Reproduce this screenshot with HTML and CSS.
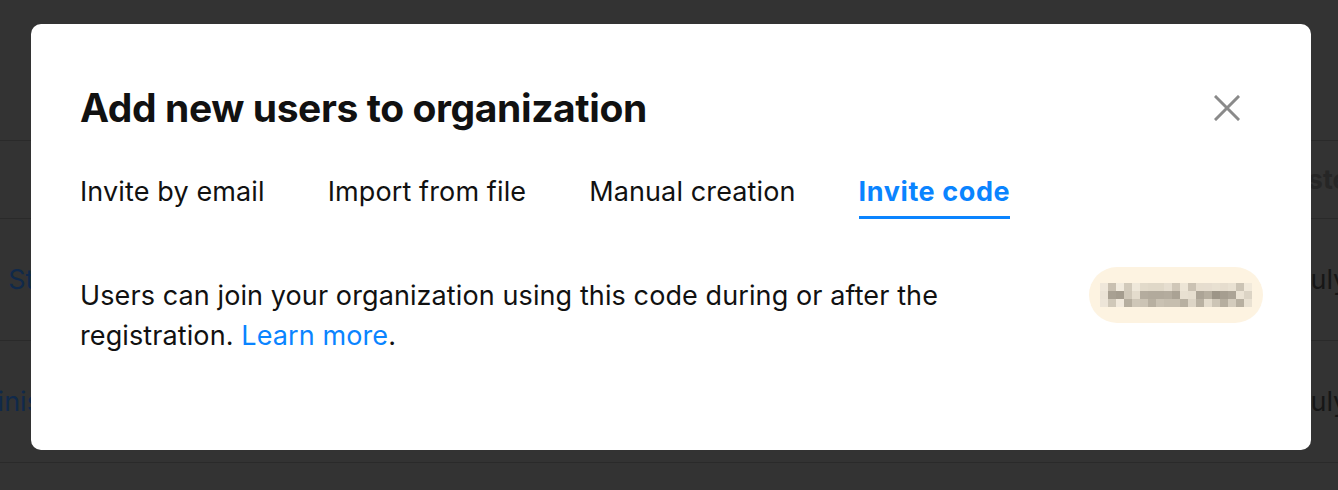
FILE: index.html
```html
<!DOCTYPE html>
<html lang="en">
<head>
    <meta charset="UTF-8">
    <meta name="viewport" content="width=device-width, initial-scale=1.0">
    <title>Organization users</title>
    <link rel="stylesheet" href="styles.css">
</head>
<body>

    <!-- Users table behind the dialog -->
    <main class="page">
        <div class="page-top"></div>
        <div class="row row-head">
            <div class="cell cell-name"></div>
            <div class="cell cell-date">Registered</div>
        </div>
        <div class="row">
            <div class="cell cell-name link">Anna Stewart</div>
            <div class="cell cell-date">July 12</div>
        </div>
        <div class="row">
            <div class="cell cell-name cell-name-wide link">Administrator</div>
            <div class="cell cell-date">July 3</div>
        </div>
        <div class="row row-last"></div>
    </main>

    <!-- Add users dialog -->
    <div class="modal">
        <div class="modal-header">
            <h1>Add new users to organization</h1>
            <button class="close" aria-label="Close">
                <svg width="26" height="26" viewBox="0 0 26 26">
                    <path d="M2 2 L24 24 M24 2 L2 24" stroke="#8a8a8a" stroke-width="3" stroke-linecap="square" fill="none"/>
                </svg>
            </button>
        </div>

        <nav class="tabs">
            <a class="tab">Invite by email</a>
            <a class="tab">Import from file</a>
            <a class="tab">Manual creation</a>
            <a class="tab tab-active">Invite code</a>
        </nav>

        <div class="modal-body">
            <p>Users can join your organization using this code during or after the registration. <a href="#" class="link-more">Learn more</a>.</p>
            <div class="code-pill">
                <svg width="152" height="24" viewBox="0 0 19 3" shape-rendering="crispEdges">
                    <g>
                        <rect x="0" y="0" width="1" height="1" fill="#efe7da"/>
                        <rect x="1" y="0" width="1" height="1" fill="#c9c0b1"/>
                        <rect x="2" y="0" width="1" height="1" fill="#f2ebde"/>
                        <rect x="3" y="0" width="1" height="1" fill="#d2cabb"/>
                        <rect x="4" y="0" width="1" height="1" fill="#efe8da"/>
                        <rect x="5" y="0" width="1" height="1" fill="#e2daca"/>
                        <rect x="6" y="0" width="1" height="1" fill="#e0d8c8"/>
                        <rect x="7" y="0" width="1" height="1" fill="#e0d8c8"/>
                        <rect x="8" y="0" width="1" height="1" fill="#e6ded0"/>
                        <rect x="9" y="0" width="1" height="1" fill="#d0c7b8"/>
                        <rect x="10" y="0" width="1" height="1" fill="#ede5d6"/>
                        <rect x="11" y="0" width="1" height="1" fill="#cbc2b3"/>
                        <rect x="12" y="0" width="1" height="1" fill="#e6ddce"/>
                        <rect x="13" y="0" width="1" height="1" fill="#e6ddcf"/>
                        <rect x="14" y="0" width="1" height="1" fill="#e8e0d1"/>
                        <rect x="15" y="0" width="1" height="1" fill="#e6ddce"/>
                        <rect x="16" y="0" width="1" height="1" fill="#e9e1d2"/>
                        <rect x="17" y="0" width="1" height="1" fill="#ccc4b5"/>
                        <rect x="18" y="0" width="1" height="1" fill="#f1e9da"/>
                    </g>
                    <g>
                        <rect x="0" y="1" width="1" height="1" fill="#ebe3d6"/>
                        <rect x="1" y="1" width="1" height="1" fill="#a8a092"/>
                        <rect x="2" y="1" width="1" height="1" fill="#a49c8e"/>
                        <rect x="3" y="1" width="1" height="1" fill="#d0c8b9"/>
                        <rect x="4" y="1" width="1" height="1" fill="#e4dccd"/>
                        <rect x="5" y="1" width="1" height="1" fill="#b4ac9e"/>
                        <rect x="6" y="1" width="1" height="1" fill="#b2aa9c"/>
                        <rect x="7" y="1" width="1" height="1" fill="#b2aa9c"/>
                        <rect x="8" y="1" width="1" height="1" fill="#b4ac9e"/>
                        <rect x="9" y="1" width="1" height="1" fill="#aaa294"/>
                        <rect x="10" y="1" width="1" height="1" fill="#e8e0d1"/>
                        <rect x="11" y="1" width="1" height="1" fill="#e6decf"/>
                        <rect x="12" y="1" width="1" height="1" fill="#aca496"/>
                        <rect x="13" y="1" width="1" height="1" fill="#b6ae9f"/>
                        <rect x="14" y="1" width="1" height="1" fill="#9d9587"/>
                        <rect x="15" y="1" width="1" height="1" fill="#a69e90"/>
                        <rect x="16" y="1" width="1" height="1" fill="#aca496"/>
                        <rect x="17" y="1" width="1" height="1" fill="#ebe3d4"/>
                        <rect x="18" y="1" width="1" height="1" fill="#dcd4c5"/>
                    </g>
                    <g>
                        <rect x="0" y="2" width="1" height="1" fill="#ede5d8"/>
                        <rect x="1" y="2" width="1" height="1" fill="#d0c8b9"/>
                        <rect x="2" y="2" width="1" height="1" fill="#f1e9dc"/>
                        <rect x="3" y="2" width="1" height="1" fill="#b6ae9f"/>
                        <rect x="4" y="2" width="1" height="1" fill="#cfc7b8"/>
                        <rect x="5" y="2" width="1" height="1" fill="#ccc4b5"/>
                        <rect x="6" y="2" width="1" height="1" fill="#b8b0a1"/>
                        <rect x="7" y="2" width="1" height="1" fill="#cac2b3"/>
                        <rect x="8" y="2" width="1" height="1" fill="#c6beaf"/>
                        <rect x="9" y="2" width="1" height="1" fill="#c6beaf"/>
                        <rect x="10" y="2" width="1" height="1" fill="#b8b0a1"/>
                        <rect x="11" y="2" width="1" height="1" fill="#ddd5c6"/>
                        <rect x="12" y="2" width="1" height="1" fill="#b9b1a2"/>
                        <rect x="13" y="2" width="1" height="1" fill="#e4dccd"/>
                        <rect x="14" y="2" width="1" height="1" fill="#cdc5b6"/>
                        <rect x="15" y="2" width="1" height="1" fill="#b6ae9f"/>
                        <rect x="16" y="2" width="1" height="1" fill="#d4ccbd"/>
                        <rect x="17" y="2" width="1" height="1" fill="#b8b0a1"/>
                        <rect x="18" y="2" width="1" height="1" fill="#e9e1d2"/>
                    </g>
                </svg>
            </div>
        </div>
    </div>

</body>
</html>
```

FILE: styles.css
```css
/* Page */
body, html {
    margin: 0;
    padding: 0;
    font-family: 'Inter', 'Noto Sans', sans-serif;
    background-color: #333333;
    overflow: hidden;
}

/* Table behind the dialog (already dimmed colours) */
.page {
    height: 490px;
    display: flex;
    flex-direction: column;
    overflow: hidden;
}

.page-top {
    flex-shrink: 0;
    box-sizing: border-box;
    height: 141px;
    border-bottom: 1px solid #2a2a2a;
}

.row {
    flex-shrink: 0;
    box-sizing: border-box;
    display: flex;
    align-items: center;
    height: 122px;
    border-bottom: 1px solid #2a2a2a;
    font-size: 27px;
    color: #161616;
}

.row-head {
    height: 78px;
    font-weight: 700;
    color: #262626;
}

.row-last {
    height: 27px;
    border-bottom: none;
}

.cell {
    white-space: nowrap;
}

/* name column: only its tail peeks out left of the dialog */
.cell-name {
    width: 106px;
    direction: rtl;
    text-align: left;
}

.cell-name-wide {
    width: 110px;
}

.cell-date {
    margin-left: auto;
    width: 43px;
}

.row-head .cell-date {
    width: 88px;
}

.link {
    color: #10294a;
}

/* Dialog */
.modal {
    position: absolute;
    top: 24px;
    left: 31px;
    width: 1280px;
    height: 426px;
    box-sizing: border-box;
    padding: 56px 48px 0 49px;
    background: #ffffff;
    border-radius: 10px;
}

.modal-header {
    display: flex;
    align-items: center;
    justify-content: space-between;
}

.modal-header h1 {
    margin: 0;
    font-size: 39px;
    font-weight: 700;
    letter-spacing: -0.4px;
    line-height: 56px;
    color: #111111;
}

.close {
    width: 48px;
    height: 48px;
    margin-right: 12px;
    padding: 0;
    border: none;
    background: none;
    display: flex;
    align-items: center;
    justify-content: center;
    cursor: pointer;
}

/* Tabs */
.tabs {
    display: flex;
    gap: 63px;
    margin-top: 38px;
}

.tab {
    font-size: 27px;
    line-height: 36px;
    letter-spacing: 0.12px;
    color: #111111;
    padding-bottom: 6px;
    border-bottom: 3px solid transparent;
    cursor: pointer;
}

.tab-active {
    color: #0a84ff;
    font-weight: 700;
    letter-spacing: 0.6px;
    border-bottom-color: #0a84ff;
}

/* Body */
.modal-body {
    display: flex;
    justify-content: space-between;
    align-items: flex-start;
    margin-top: 48px;
}

.modal-body p {
    margin: 9px 0 0;
    max-width: 890px;
    font-size: 27px;
    line-height: 40px;
    letter-spacing: 0.1px;
    color: #111111;
}

.link-more {
    color: #0a84ff;
    text-decoration: none;
}

.code-pill {
    width: 174px;
    height: 56px;
    border-radius: 28px;
    background: #fdf3e1;
    display: flex;
    align-items: center;
    justify-content: center;
}
```
